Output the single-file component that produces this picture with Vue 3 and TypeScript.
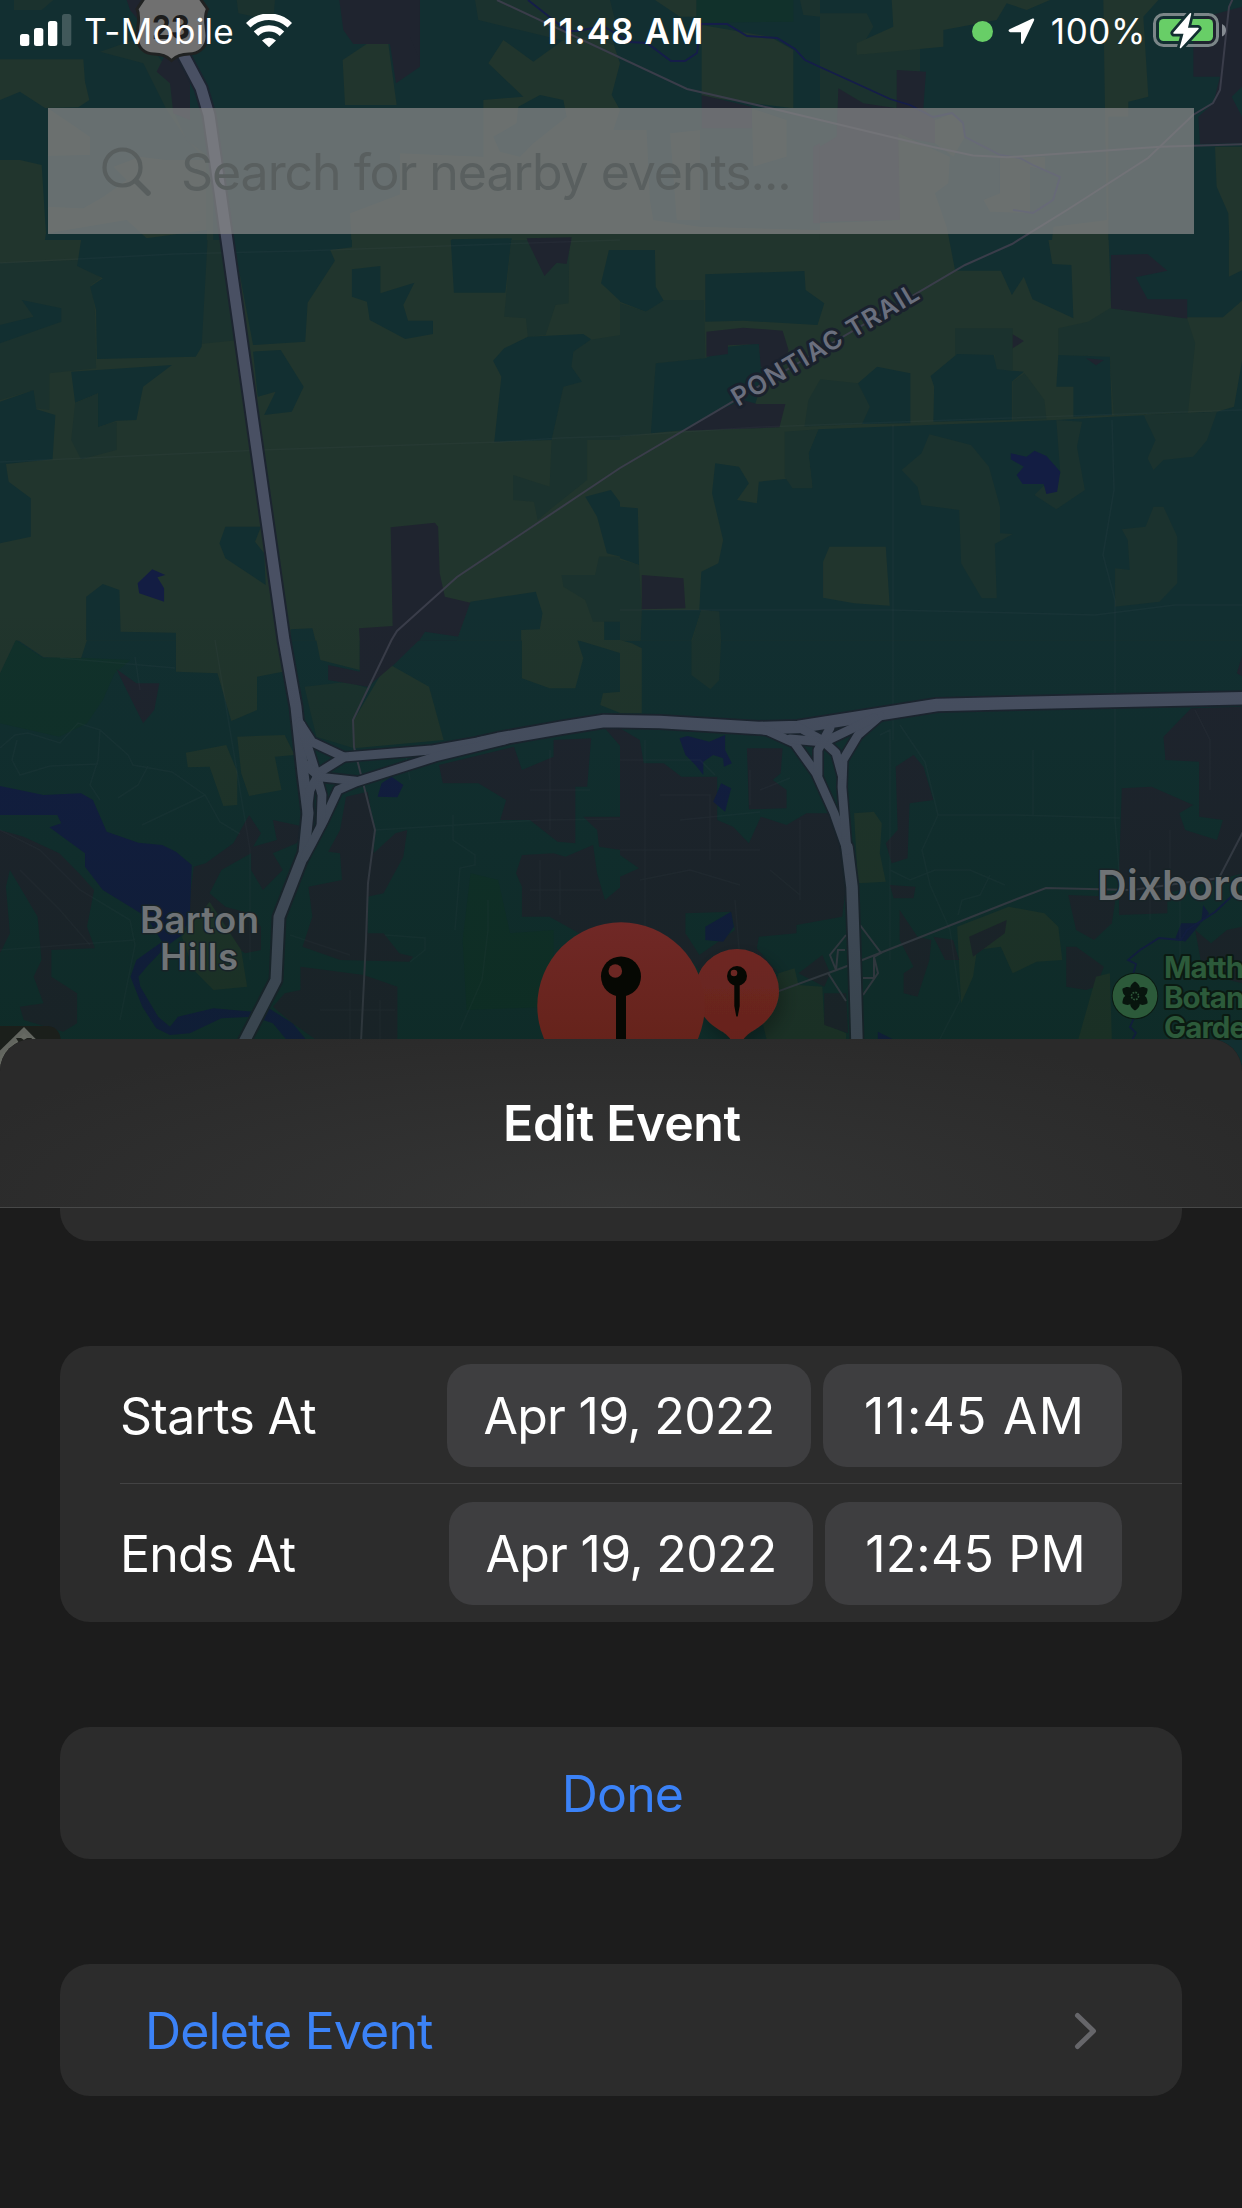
<script setup lang="ts">
type Kind = 'field' | 'meadow' | 'wood' | 'park' | 'town' | 'water'

interface Tile {
  id: string
  transform: string
  shapes: [Kind, string][]
}

interface EventTime {
  label: string
  date: string
  time: string
}

const tiles: Tile[] = [
  {
    id: 'nw',
    transform: 'scale(.33333)',
    shapes: [
      ['meadow', '300,155 430,110 490,190 520,250 520,330 560,420 640,480 640,780 620,780 620,480 560,420 500,330 430,190'],
      ['meadow', '710,0 825,0 820,62 715,40'],
      ['meadow', '42,0 160,0 125,30 42,30'],
      ['field', '0,178 250,178 255,245 268,300 235,322 135,324 60,275 0,300'],
      ['field', '0,480 60,480 125,495 138,700 125,780 0,780'],
      ['field', '144,325 200,362 270,410 270,465 144,468'],
      ['field', '144,620 250,625 310,590 380,540 340,500 420,470 500,480 620,480 620,690 440,715 380,660 144,700'],
      ['field', '1050,640 1260,560 1260,780 1000,780 1000,745 1055,740'],
      ['field', '1100,132 1165,132 1190,315 1035,315 1028,180'],
      ['town', '380,0 430,0 415,60 390,30'],
      ['town', '495,165 470,215 510,250 520,340 570,360 570,200 540,165'],
      ['town', '1018,0 1260,0 1260,200 1188,250 1170,132 1060,132 1030,90'],
    ],
  },
  {
    id: 'n',
    transform: 'translate(400 0) scale(.33333)',
    shapes: [
      ['field', '310,120 400,185 490,120 560,110 640,130 660,190 635,285 660,330 640,390 740,390 750,600 760,660 900,680 1260,690 1260,780 0,780 0,460 250,470 250,300 370,290 265,190'],
      ['meadow', '225,0 630,0 645,60 640,135 560,110 490,122 400,100 235,60'],
      ['wood', '420,285 490,300 500,350 400,430 360,470 300,455 280,410 350,370 355,320'],
      ['field', '765,0 890,0 890,50 840,50'],
      ['park', '890,0 1180,0 1180,65 890,68'],
      ['meadow', '1200,0 1260,0 1260,50 1210,45'],
      ['field', '905,75 1110,110 1180,150 1180,325 905,290'],
      ['field', '810,400 900,390 900,660 830,660'],
      ['field', '1055,325 1160,360 1160,470 1060,500'],
      ['town', '905,285 1055,320 1055,385 905,385'],
      ['town', '1240,440 1260,430 1260,670 1240,670'],
      ['town', '0,0 30,0 30,110 60,180 0,240'],
      ['wood', '155,718 335,715 335,780 155,780'],
      ['town', '380,715 515,712 500,780 410,780'],
      ['wood', '620,752 765,752 765,780 620,780'],
    ],
  },
  {
    id: 'ne',
    transform: 'translate(820 0) scale(.33333)',
    shapes: [
      ['meadow', '0,40 140,40 160,80 110,165 300,140 300,215 235,215 230,330 0,330'],
      ['field', '215,0 690,0 620,30 560,10 530,60 370,90 370,140 110,165 110,130 220,80'],
      ['town', '230,210 318,215 310,325 345,360 345,430 240,410 240,660 0,665 0,440 50,410 55,265 130,310 230,325'],
      ['field', '850,0 1015,0 970,50 985,290 925,305 925,350 865,350 865,780 690,780 700,680 860,660'],
      ['field', '0,670 240,660 235,400 390,470 385,550 345,580 380,680 400,780 0,780'],
      ['field', '345,360 400,340 430,370 435,410 400,470 345,430'],
      ['field', '540,475 675,470 675,510 630,500 630,640 510,635 490,600 540,580'],
      ['field', '1185,440 1266,440 1266,780 1230,780 1225,640 1190,560'],
      ['town', '1120,60 1266,20 1266,260 1235,290 1266,350 1266,430 1140,432 1135,350 1180,310 1200,230 1120,230'],
      ['town', '870,765 1000,768 960,780 870,780'],
    ],
  },
  {
    id: 'w',
    transform: 'translate(0 240) scale(.39541 .33333)',
    shapes: [
      ['field', '0,0 1570,0 1570,1202 0,1202'],
      ['meadow', '0,70 195,60 255,115 230,135 240,210 243,385 125,400 125,510 90,505 85,450 0,480'],
      ['meadow', '525,0 565,0 605,300 505,312'],
      ['wood', '205,0 525,0 510,320 495,350 245,357 243,210 228,140 260,115 195,78'],
      ['wood', '590,0 890,0 890,22 835,30 847,62 778,188 772,305 640,315'],
      ['wood', '55,180 155,205 155,245 0,310 0,255 85,230'],
      ['wood', '180,395 435,375 362,440 345,540 295,542 248,562 248,460 190,488'],
      ['meadow', '190,490 248,460 248,562 295,545 295,630 205,658 180,600'],
      ['wood', '0,485 85,450 92,508 140,525 133,658 15,672 22,725 78,775 78,890 0,910'],
      ['wood', '640,335 710,330 768,440 738,515 668,525 697,455 652,470'],
      ['wood', '890,88 962,78 962,160 1048,128 1020,195 1032,242 1095,242 1095,282 1025,297 935,240 928,185 890,170'],
      ['wood', '1140,0 1293,0 1278,158 1148,158'],
      ['meadow', '1293,0 1440,0 1438,190 1405,195 1380,285 1335,290 1330,235 1275,230'],
      ['town', '1333,0 1445,0 1433,72 1408,68 1377,108'],
      ['wood', '1540,30 1570,30 1570,185 1520,130'],
      ['meadow', '1490,300 1570,285 1570,600 1485,600 1485,720 1400,800 1360,840 1350,785 1298,780 1298,705 1390,740 1395,600 1425,440 1450,335'],
      ['wood', '1335,290 1475,282 1495,298 1450,335 1445,380 1472,425 1425,440 1395,600 1250,605 1268,410 1247,362 1275,325'],
      ['wood', '1480,770 1545,750 1570,790 1570,950 1535,940 1510,830'],
      ['meadow', '1570,950 1515,950 1505,1005 1420,1005 1425,1040 1480,1080 1500,1145 1570,1145'],
      ['town', '988,862 1100,848 1108,860 1112,1000 1125,1070 1190,1088 1155,1202 910,1202 908,1165 993,1158'],
      ['wood', '1190,1085 1355,1055 1372,1120 1365,1168 1318,1170 1318,1202 1155,1202'],
      ['wood', '1060,1202 1075,1175 1160,1190 1155,1202'],
      ['wood', '570,860 660,860 645,905 668,940 672,1035 570,955 555,910'],
      ['wood', '218,1070 260,1032 302,1050 305,1175 445,1178 445,1202 218,1202'],
      ['wood', '735,1168 790,1165 798,1202 735,1202'],
      ['wood', '1528,1145 1570,1145 1570,1202 1528,1202'],
      ['water', '385,988 418,1005 398,1012 415,1045 415,1085 352,1060 348,1030'],
    ],
  },
  {
    id: 'e',
    transform: 'translate(620 240) scale(.39666 .33333)',
    shapes: [
      ['field', '0,0 1570,0 1570,1202 0,1202'],
      ['wood', '0,30 88,30 90,140 112,185 65,215 0,185'],
      ['meadow', '0,190 65,215 112,180 212,180 215,355 90,370 80,580 0,590'],
      ['wood', '215,103 465,93 468,150 515,190 498,255 310,242 215,245'],
      ['wood', '90,370 215,355 272,320 350,310 360,420 340,495 240,520 165,570 78,580'],
      ['town', '218,275 310,263 410,272 425,330 400,400 355,380 350,312 272,316 272,342 218,350'],
      ['town', '310,480 345,492 417,492 402,562 165,572 240,515'],
      ['wood', '830,0 1080,0 1090,72 1138,75 1143,235 1040,178 1018,110 988,165 960,92 845,92'],
      ['wood', '1232,0 1535,0 1535,110 1570,90 1570,180 1520,232 1430,232 1238,200'],
      ['town', '1238,45 1330,42 1380,92 1300,112 1330,178 1430,178 1430,236 1238,218'],
      ['meadow', '845,265 990,265 990,390 945,392 945,345 845,345'],
      ['meadow', '1105,265 1180,245 1235,205 1430,236 1450,310 1432,518 1245,525 1235,350 1105,345'],
      ['meadow', '505,418 600,430 630,500 610,552 465,560 475,480'],
      ['wood', '600,430 648,380 732,400 732,550 610,552 630,500'],
      ['wood', '850,342 942,345 950,388 1018,395 988,425 988,540 790,545 792,440 783,408'],
      ['meadow', '990,425 1020,400 1070,480 1075,538 990,540'],
      ['wood', '1105,345 1235,350 1240,525 1143,530 1143,440 1100,440'],
      ['town', '990,283 1018,303 990,325'],
      ['town', '1175,355 1220,360 1200,376'],
      ['wood', '500,568 1100,540 1240,530 1505,515 1548,500 1570,350 1570,1202 250,1202 250,1115 200,1110 205,995 248,970 260,900 232,760 240,670 300,680 325,730 295,780 345,790 350,725 435,715 435,745 485,740 475,640'],
      ['meadow', '415,575 500,568 475,640 485,745 435,745 415,710'],
      ['meadow', '780,583 885,615 930,680 958,800 958,880 990,882 945,912 950,1075 912,1075 860,970 855,810 760,795 750,740 710,690 760,640'],
      ['meadow', '1100,540 1165,545 1152,620 1172,750 1100,808 1045,765 1070,735 1110,700'],
      ['meadow', '1320,525 1505,515 1480,600 1445,650 1370,660 1345,690 1330,655 1350,600'],
      ['meadow', '1345,800 1370,800 1405,890 1405,1030 1360,1085 1248,1100 1248,985 1285,990 1280,900 1265,868 1325,860'],
      ['field', '528,920 670,920 680,1097 590,1090 512,1073 512,965'],
      ['water', '985,640 1025,650 1045,632 1075,648 1110,695 1102,755 1075,762 1068,732 1015,732 1000,705 1018,680 985,658'],
      ['wood', '0,800 45,805 48,975 0,955'],
      ['meadow', '0,960 48,975 55,1115 52,1202 0,1202'],
      ['town', '55,1005 160,1015 165,1105 55,1108'],
      ['wood', '55,1110 205,1110 180,1202 52,1202'],
      ['meadow', '205,1110 250,1115 255,1202 182,1202'],
    ],
  },
  {
    id: 'sw',
    transform: 'translate(0 640) scale(.39541 .33333)',
    shapes: [
      ['park', '40,0 110,55 150,50 330,60 290,100 260,180 220,250 150,290 0,250 0,100'],
      ['field', '0,0 40,0 0,100'],
      ['field', '45,0 220,0 205,55 110,52'],
      ['field', '445,0 710,0 715,95 650,110 650,210 585,243 550,100 445,95'],
      ['field', '600,290 720,285 745,345 695,350 712,450 630,468 610,400'],
      ['field', '470,338 572,315 600,395 600,495 565,498 530,380 475,382'],
      ['town', '295,88 345,130 403,130 390,210 362,250 320,150'],
      ['meadow', '770,140 880,125 930,145 895,240 895,325 800,290'],
      ['field', '980,70 1085,140 1122,300 895,325 895,240'],
      ['field', '800,0 910,0 910,90 810,60'],
      ['town', '910,0 1060,0 1000,70 930,140 830,120 830,75 910,95'],
      ['field', '1320,0 1460,0 1475,55 1455,145 1390,145 1320,115'],
      ['field', '1460,0 1570,0 1570,40'],
      ['field', '1525,160 1570,155 1570,220 1518,195'],
      ['park', '1190,700 1260,720 1290,880 1400,870 1400,1100 1180,1110 1170,900'],
      ['town', '0,570 60,590 150,640 200,700 238,750 220,860 240,925 130,930 130,1010 195,1060 195,1150 160,1175 60,1140 50,1100 110,1090 85,1010 105,960 95,830 60,760 25,690 15,740 25,880 0,940'],
      ['town', '490,680 520,670 590,610 630,525 660,580 640,620 700,600 690,540 770,560 750,610 690,640 715,690 665,750 635,690 635,640 560,690 530,760 570,800 630,820 660,860 660,930 620,940 530,870 470,880'],
      ['field', '530,785 610,930 625,1040 540,1050 490,990 460,890'],
      ['water', '0,438 110,465 205,460 235,480 270,575 350,608 410,615 445,635 485,675 480,830 460,885 420,920 375,975 350,1010 355,1040 400,1130 430,1160 450,1130 540,1105 640,1115 680,1105 740,1150 775,1200 725,1200 690,1150 640,1130 560,1135 480,1180 430,1185 395,1165 360,1100 330,1010 345,960 410,905 370,830 260,750 215,680 215,640 125,562 155,550 145,525 0,525'],
      ['town', '875,470 930,455 945,560 945,640 1000,580 1030,570 1020,650 970,760 930,770 930,880 970,880 1010,940 1045,950 1035,965 860,960 765,920 790,830 780,740 865,720 860,640 830,635 860,570'],
      ['town', '760,980 920,1005 1005,1040 1005,1200 800,1200 740,1150 690,1100 720,1060 760,1050'],
      ['water', '965,430 990,410 1020,435 1005,472 955,470'],
      ['town', '1110,375 1300,320 1320,390 1400,350 1400,300 1495,295 1485,440 1455,440 1455,610 1410,605 1340,540 1265,540 1280,480 1210,430 1120,430'],
      ['town', '1320,645 1400,640 1430,650 1500,615 1510,700 1530,780 1570,740 1570,890 1480,890 1390,830 1320,830 1320,740 1305,700'],
      ['town', '1475,530 1570,530 1570,630 1515,620 1510,570'],
      ['town', '1530,265 1570,265 1570,320'],
    ],
  },
  {
    id: 'se',
    transform: 'translate(620 640) scale(.39666 .33333)',
    shapes: [
      ['field', '0,0 30,10 55,25 55,220 0,220'],
      ['meadow', '180,0 255,0 250,120 228,148 180,105'],
      ['town', '0,265 50,300 60,370 110,370 155,410 245,410 245,540 285,560 325,610 355,530 420,555 470,520 530,520 555,600 570,740 560,830 445,855 445,880 350,890 345,925 400,1000 300,930 200,990 150,920 0,850'],
      ['wood', '165,820 280,815 290,870 200,945 165,880'],
      ['wood', '0,645 48,685 0,710'],
      ['water', '215,860 280,815 287,860 260,905 215,900'],
      ['water', '150,295 170,288 225,305 265,285 265,330 282,370 262,380 260,355 235,345 210,365 210,405 190,375 165,345'],
      ['water', '255,430 280,445 265,515 235,485'],
      ['town', '320,325 410,325 405,400 385,420 420,450 420,505 325,508'],
      ['town', '695,380 740,345 765,380 790,480 730,490 725,655 685,670 670,610 700,570'],
      ['field', '590,520 640,515 660,550 655,640 670,725 600,730'],
      ['town', '680,735 745,740 740,775 690,775'],
      ['field', '850,860 980,800 1070,820 1105,860 1115,960 1050,965 990,1000 960,920 900,930 890,1010 860,1090'],
      ['town', '880,890 975,840 970,880 890,950'],
      ['town', '705,810 750,890 785,900 780,960 750,1070 715,1060 715,1000 740,980 705,900'],
      ['town', '790,890 840,900 855,960 820,960'],
      ['town', '1130,765 1250,770 1240,850 1195,900 1150,870'],
      ['town', '1125,920 1150,920 1220,980 1200,1040 1175,1050 1125,1040'],
      ['town', '1265,445 1340,440 1445,495 1410,520 1425,570 1505,600 1520,540 1460,530 1460,365 1375,360 1370,290 1440,205 1570,200 1570,700 1380,760 1380,820 1258,825 1258,700'],
      ['town', '1450,870 1490,910 1530,870 1570,860 1570,1030 1470,1000'],
      ['town', '1555,100 1570,40 1570,110'],
      ['field', '1155,1200 1200,1010 1235,1000 1240,1200'],
      ['field', '400,1000 440,985 450,1035 510,1040 515,1150 570,1180 570,1200 370,1200 360,1150'],
      ['town', '450,1000 510,945 530,1000 515,1040'],
      ['town', '515,1060 570,1060 575,1180 515,1155'],
      ['water', '1470,795 1485,820 1450,870 1425,905 1400,895 1415,850 1465,850'],
      ['water', '650,1175 692,1200 650,1200'],
    ],
  },
]

const lanes: string[] = [
  'M0 263L175 254L300 251L620 240',
  'M0 462L260 450L500 442L560 438L620 436L760 427L980 419L1242 410',
  'M620 610H890L1095 615L1175 605H1242',
  'M893 425V740M1112 420L1114 490L1103 555L1115 600V820L1120 880',
  'M60 658L175 668M215 640L250 850V960M135 657L140 690M0 748L15 735L28 733L60 743L78 723L100 730L128 755L133 765L172 772L205 795L220 822L240 834M100 730L98 760L90 785L100 800M98 764L50 766L20 775L12 760L17 740M205 795L142 825M148 766L138 785L118 798',
  'M375 830L540 820L620 819M453 815V840L475 855V865L460 868L455 930M0 830L40 850L80 890L130 920L135 945L120 1020M135 940L0 950M290 935L350 955M385 935L425 938V950L410 962M488 900V930L482 980L460 1030',
  'M900 725L925 762L938 815L1015 815L1120 818M1033 750V815M938 815L922 850L930 885L950 930L960 1000L940 1039M890 960V730L880 735M890 870L910 880L935 870H970L1005 885M990 875L980 895L962 900L958 915',
  'M620 760H700L715 775M645 740V1000M660 795H710V860M620 850H760M640 880L690 870L740 885M735 900L740 960M770 870L800 895M800 820V900M680 820L760 812M750 770V805M760 790L790 778M1195 710L1210 740V790M1150 850V920M1170 830V900M1180 900V960',
  'M405 750L410 780M550 750V830M530 790H590M540 860V910M560 870V915M530 890H600M20 870L60 910L90 945M350 990V1039M320 1010H395M380 1000V1039',
]

const highway = 'M184 56L201 88L209 115L227 240L284 640L296 707L303 773L308 813L304 853L279 917L276 980L244 1042'
const freeway = 'M480 743L498 739L560 728L604 721L660 722L759 728L798 727L874 715L937 705L1017 703L1248 698'
const beltway = 'M847 847L852 887L855 973L857 1042'
const ramps: string[] = [
  'M299 722L312 742L344 757L431 750L505 737',
  'M505 740L435 757L356 782L338 790L324 820L312 843L304 858',
  'M301 725L316 773L322 795L321 825',
  'M344 757L320 772L310 790L307 813',
  'M356 781L320 777L302 762',
  'M750 728L768 731L794.5 743L816 773L834 813L847 850',
  'M880 716L858 735L843 760L842 787L847 850',
  'M798 727L822 740L836 753L842 775',
  'M790 739L824 742L874 718',
  'M830 728L818 750V775',
]
const byways: string[] = [
  'M497 0L687 89L770 108L933 147L973 155.500L1007 157.300L1160 146.700L1242 144.300',
  'M1234 -4L1229 7L1220 90L1213 103L1193 115L1148 158L1067 210L1012 244L965 265L620 468L457 577L397 631L391.500 640L353 720L354 747L358 763L375 830L368 883L366 940L361 1042',
  'M760 998L842 968L880 953L1017 899L1046 888L1132 890L1219 878L1245 828',
  'M860 925L881 953L874 957L878 973L863 995M874 957V978H863M846 935L830 955L836 970L838 950H845M828 973L846 1001',
]
const creeks: string[] = [
  'M528 0L547 15L567 31L577 31L603 26L630 42L647 43L671 61H685L697 53L701 24H727L747 36L777 38L795 49L805 60L820 67L853 82L890 99L910 105L933 117L952 113L963 123L965 137L1000 155L1020 158L1033 165L1060 177L1053 200L1033 213L1013 210',
  'M1245 870L1231 897L1215 912L1187 930L1181 940L1159 938L1140 950L1128 960L1136 964L1133 975',
  'M1134 1018L1130 1027L1136 1033L1132 1040',
]

const times: EventTime[] = [
  { label: 'Starts At', date: 'Apr 19, 2022', time: '11:45 AM' },
  { label: 'Ends At', date: 'Apr 19, 2022', time: '12:45 PM' },
]
</script>

<template>
  <div class="phone">
    <svg class="map" width="1242" height="1100" viewBox="0 0 1242 1100" aria-hidden="true">
      <defs>
        <linearGradient id="shade" x1="0" y1="0" x2="0" y2="1">
          <stop offset="0" stop-color="#04200c" stop-opacity="0" />
          <stop offset="1" stop-color="#04200c" stop-opacity=".24" />
        </linearGradient>
        <linearGradient id="pin" x1="0" y1="922" x2="0" y2="1040" gradientUnits="userSpaceOnUse">
          <stop offset="0" stop-color="#702826" />
          <stop offset="1" stop-color="#66231b" />
        </linearGradient>
        <filter id="drop" x="-40%" y="-40%" width="180%" height="180%">
          <feDropShadow dx="4" dy="8" stdDeviation="9" flood-color="#000" flood-opacity=".28" />
        </filter>
      </defs>
      <rect class="wood" width="1242" height="1100" />
      <g v-for="tile in tiles" :key="tile.id" :transform="tile.transform">
        <polygon v-for="([kind, points], i) in tile.shapes" :key="i" :class="kind" :points="points" />
      </g>
      <path v-for="(d, i) in lanes" :key="'l' + i" class="lane" :d="d" />
      <path v-for="(d, i) in creeks" :key="'c' + i" class="creek" :d="d" />
      <path v-for="(d, i) in byways" :key="'b' + i" class="byway" :d="d" />
      <g class="casing">
        <path :d="highway" stroke-width="15" />
        <path :d="freeway" stroke-width="16" />
        <path :d="beltway" stroke-width="15" />
        <path v-for="(d, i) in ramps" :key="'r' + i" :d="d" stroke-width="12" />
      </g>
      <g class="surface">
        <path :d="highway" stroke-width="11" />
        <path :d="freeway" stroke-width="12.500" />
        <path :d="beltway" stroke-width="11.500" />
        <path v-for="(d, i) in ramps" :key="'r' + i" :d="d" stroke-width="8.800" />
      </g>
      <rect y="600" width="1242" height="440" fill="url(#shade)" />

      <path class="shield" d="M147 -6L137 9C141 17 137 28 137 36C137 48 145 54 154 54C162 54 167 56 171.500 60.500C176 56 181 54 189 54C198 54 207 48 207 36C207 28 203 17 207.500 9L197 -6Z" />
      <text class="route" x="152" y="38.500" textLength="38" lengthAdjust="spacingAndGlyphs">23</text>

      <text class="street" transform="translate(738 407) rotate(-30.700)" textLength="213">PONTIAC TRAIL</text>
      <text class="place" x="140" y="933" font-size="36.500" textLength="119">Barton</text>
      <text class="place" x="160" y="970" font-size="36.500" textLength="78">Hills</text>
      <text class="place" x="1097" y="900" font-size="41" textLength="157">Dixboro</text>
      <g class="garden">
        <text x="1164" y="977.500">Matthaei</text>
        <text x="1164" y="1007.500">Botanical</text>
        <text x="1164" y="1038">Gardens</text>
        <circle cx="1135" cy="996" r="22.300" />
      </g>
      <g transform="translate(1135 996)" fill="#08150e">
        <path v-for="n in 6" :key="n" :transform="`rotate(${n * 60})`" d="M-3 -3.500C-6.500 -8 -4.500 -12 0 -14.500C4.500 -12 6.500 -8 3 -3.500Z" />
        <circle r="5" />
        <circle r="3.600" fill="none" stroke="#2c5537" stroke-width="1.600" stroke-dasharray="1.800 1" />
      </g>

      <path d="M0 1026H48Q61 1027 61 1044V1100H0Z" fill="#1b1f1b" />
      <path d="M-20 1070L24 1027L66 1070L24 1112Z" fill="#62655f" />
      <path d="M-14 1070L24 1033L60 1070Z" fill="#666962" />
      <path d="M16 1038H21L24 1040L27 1038H32L29 1043H19Z" fill="#1d201c" />

      <g filter="url(#drop)">
        <path d="M737 949A42 42 0 0 1 779 991C779 1008 768 1023 751 1032Q746 1035 737 1047Q728 1035 723 1032C706 1023 695 1008 695 991A42 42 0 0 1 737 949Z" fill="url(#pin)" />
      </g>
      <circle cx="737" cy="976" r="10" fill="#060803" />
      <circle cx="734" cy="973" r="3.300" fill="#6c2723" />
      <path d="M734.300 984H739.700V1006L737.700 1016.500H736.300L734.300 1006Z" fill="#060803" />
      <circle cx="621" cy="1006" r="83.700" fill="url(#pin)" />
      <circle cx="621" cy="976.500" r="20" fill="#060803" />
      <circle cx="615.300" cy="971" r="6.800" fill="#6c2723" />
      <rect x="616" y="990" width="10" height="60" fill="#060803" />
    </svg>

    <header class="status">
      <div class="side left">
        <svg width="52" height="34" viewBox="0 0 52 34" fill="#fff">
          <rect y="20" width="9.300" height="12" rx="2.500" />
          <rect x="14" y="14" width="9.300" height="18" rx="2.500" />
          <rect x="28" y="7" width="9.300" height="25" rx="2.500" />
          <rect x="42" width="9.300" height="32" rx="2.500" opacity=".2" />
        </svg>
        <span class="carrier">T-Mobile</span>
        <svg class="wifi" width="46" height="34" viewBox="0 0 46 34" fill="none">
          <path d="M2.200 11.300A29.500 29.500 0 0 1 43.800 11.300" stroke="#fff" stroke-width="6.500" />
          <path d="M10 19.800A18.500 18.500 0 0 1 36 19.800" stroke="#fff" stroke-width="6.300" />
          <path d="M16 26.500A10.500 10.500 0 0 1 30 26.500L23 33.300Z" fill="#fff" />
        </svg>
      </div>
      <span class="clock">11:48 AM</span>
      <div class="side right">
        <span class="dot"></span>
        <svg class="arrow" width="27" height="27" viewBox="0 0 27 27">
          <path d="M1.500 11.200L24.500 .6Q26.800 0 26 2.400L15.200 25.300Q13.600 27.200 13 24.700V14.300H2.300Q-.8 13.300 1.500 11.200Z" fill="#fff" />
        </svg>
        <span class="percent">100%</span>
        <svg class="battery" width="74" height="36" viewBox="0 0 74 36">
          <rect x="1.500" y="1.500" width="63" height="31" rx="9" fill="none" stroke="#7b8688" stroke-width="3" />
          <rect x="6" y="6" width="54" height="22" rx="4.500" fill="#68ce67" />
          <path d="M69 11V23.500Q73 21.500 73 17.200Q73 13 69 11Z" fill="#858b92" />
          <path d="M37.500 .8L21 20H31.500L27.500 34.500L45 15.500H34Z" fill="#fff" stroke="#122f31" stroke-width="7" stroke-linejoin="round" />
          <path d="M37.500 .8L21 20H31.500L27.500 34.500L45 15.500H34Z" fill="#fff" stroke="#fff" stroke-width="1.500" stroke-linejoin="round" />
        </svg>
      </div>
    </header>

    <div class="search">
      <svg width="50" height="50" viewBox="0 0 50 50" fill="none" stroke="#585e5e" stroke-linecap="round">
        <circle cx="20.500" cy="20.500" r="18" stroke-width="4.200" />
        <path d="M34 34L46 46" stroke-width="5.500" />
      </svg>
      <span>Search for nearby events...</span>
    </div>

    <section class="sheet">
      <h1 class="title"><span>Edit Event</span></h1>
      <div class="body">
        <div class="card tail"></div>
        <div class="card">
          <div v-for="item in times" :key="item.label" class="row">
            <span class="label">{{ item.label }}</span>
            <span class="pill date"><span>{{ item.date }}</span></span>
            <span class="pill time"><span>{{ item.time }}</span></span>
          </div>
        </div>
        <button class="card action"><span class="done">Done</span></button>
        <button class="card action link">
          <span class="delete">Delete Event</span>
          <svg width="24" height="38" viewBox="0 0 24 38" fill="none">
            <path d="M3.500 3.500L19.500 19L3.500 34.500" stroke="#66666a" stroke-width="5" stroke-linecap="round" stroke-linejoin="round" />
          </svg>
        </button>
      </div>
    </section>
  </div>
</template>

<style>
body {
  background: #1c1c1c;
}
</style>

<style scoped>
.phone {
  position: relative;
  display: flex;
  flex-direction: column;
  width: 1242px;
  height: 2208px;
  overflow: hidden;
  background: #1c1c1c;
  color: #fff;
  font-family: Inter, "Liberation Sans", sans-serif;
  font-size: 50px;
}
.map {
  position: absolute;
  top: 0;
  left: 0;
}
.wood { fill: #122f31; }
.field { fill: #21352d; }
.meadow { fill: #1b322e; }
.park { fill: #11312b; }
.town { fill: #1f242f; }
.water { fill: #131d43; }
.lane {
  fill: none;
  stroke: #55606a;
  stroke-opacity: .09;
  stroke-width: 1.5;
}
.creek {
  fill: none;
  stroke: #151d4a;
  stroke-width: 1.8;
}
.byway {
  fill: none;
  stroke: #3a3d4a;
  stroke-width: 2;
}
.casing, .surface {
  fill: none;
  stroke-linejoin: round;
  stroke-linecap: round;
}
.casing { stroke: #1c2430; }
.surface { stroke: #495063; }
.shield {
  fill: #707070;
  stroke: #202222;
  stroke-width: 3;
}
.route {
  fill: #1d1d1d;
  font-size: 33px;
  font-weight: 700;
}
.street {
  fill: #6a6f7e;
  stroke: #1a212d;
  stroke-width: 6px;
  stroke-linejoin: round;
  paint-order: stroke;
  font-size: 25.5px;
  font-weight: 600;
}
.place {
  fill: #6f7376;
  stroke: #182327;
  stroke-width: 3px;
  stroke-linejoin: round;
  paint-order: stroke;
  font-weight: 600;
}
.garden {
  fill: #2c5a3a;
  stroke: #0b1a12;
  stroke-width: 4px;
  stroke-linejoin: round;
  paint-order: stroke;
  font-size: 29.5px;
  font-weight: 700;
  letter-spacing: -0.9px;
}
.garden circle { stroke-width: 2px; }
.status {
  position: relative;
  display: grid;
  grid-template-columns: 1fr auto 1fr;
  align-items: center;
  height: 62px;
  padding: 0 15px 0 20px;
  font-size: 35px;
}
.side {
  display: flex;
  align-items: center;
}
.right { justify-content: flex-end; }
.carrier {
  margin-left: 12px;
  letter-spacing: 0.3px;
}
.wifi { margin-left: 12px; }
.clock {
  font-weight: 600;
  letter-spacing: 1.1px;
}
.dot {
  width: 21px;
  height: 21px;
  border-radius: 50%;
  background: #68ce67;
}
.arrow { margin-left: 15px; }
.percent {
  margin-left: 16px;
  letter-spacing: 0.6px;
}
.battery { margin-left: 7px; }
.search {
  position: relative;
  display: flex;
  align-items: center;
  gap: 29px;
  height: 126px;
  margin: 46px 48px 0;
  padding: 2px 0 0 54px;
  box-sizing: border-box;
  background: rgba(136, 136, 137, .72);
  color: #595f5f;
  letter-spacing: -1.05px;
}
.sheet {
  position: relative;
  flex: 1;
  margin-top: 805px;
  overflow: hidden;
  border-radius: 32px 32px 0 0;
  background: #1c1c1c;
}
.title {
  display: flex;
  align-items: center;
  justify-content: center;
  height: 168px;
  margin: 0;
  padding-left: 2px;
  border-bottom: 1px solid #474848;
  background: radial-gradient(ellipse 720px 190px at 50% 100%, rgba(60, 61, 61, .6), rgba(42, 42, 42, 0)), #2a2a2a;
  font-size: 50px;
  font-weight: 600;
  letter-spacing: -0.35px;
}
.body {
  display: flex;
  flex-direction: column;
  gap: 105px;
  padding: 0 60px;
}
.card {
  flex: none;
  border-radius: 30px;
  background: #2c2c2c;
}
.tail {
  height: 33px;
  border-radius: 0 0 30px 30px;
}
.row {
  display: flex;
  align-items: center;
  height: 138px;
  margin-left: 60px;
  padding-right: 60px;
  box-sizing: border-box;
}
.row + .row {
  height: 139px;
  margin-top: -1px;
  border-top: 1px solid #434344;
}
.label {
  flex: 1;
  padding-top: 1px;
  letter-spacing: -0.75px;
}
.pill {
  display: flex;
  align-items: center;
  justify-content: center;
  height: 103px;
  padding-top: 2px;
  box-sizing: border-box;
  border-radius: 24px;
  background: #3e3e40;
}
.date {
  width: 364px;
  margin-right: 12px;
  letter-spacing: -0.7px;
}
.time {
  width: 299px;
  padding-left: 4px;
  letter-spacing: 1.2px;
}
.row + .row .time {
  width: 297px;
  letter-spacing: 0.2px;
}
.action {
  display: flex;
  align-items: center;
  justify-content: center;
  height: 132px;
  padding: 2px 0 0;
  border: 0;
  color: #3b82f7;
  font: inherit;
  letter-spacing: -0.85px;
}
.done { padding-left: 3px; }
.link {
  justify-content: space-between;
  padding: 1px 84px 0 85px;
}
</style>
